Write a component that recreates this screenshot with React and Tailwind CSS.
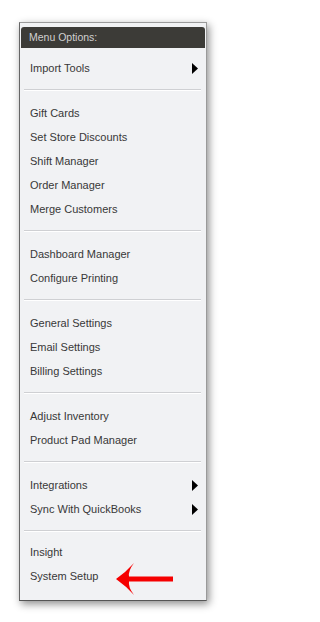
import React from 'react';

const sections = [
    [{ label: 'Import Tools', sub: true }],
    [
        { label: 'Gift Cards' },
        { label: 'Set Store Discounts' },
        { label: 'Shift Manager' },
        { label: 'Order Manager' },
        { label: 'Merge Customers' },
    ],
    [{ label: 'Dashboard Manager' }, { label: 'Configure Printing' }],
    [{ label: 'General Settings' }, { label: 'Email Settings' }, { label: 'Billing Settings' }],
    [{ label: 'Adjust Inventory' }, { label: 'Product Pad Manager' }],
    [
        { label: 'Integrations', sub: true },
        { label: 'Sync With QuickBooks', sub: true },
    ],
    [{ label: 'Insight' }, { label: 'System Setup' }],
];

const SubArrow = () => (
    <svg width="6" height="11" viewBox="0 0 6 11" className="shrink-0">
        <polygon points="0,0 6,5.5 0,11" fill="#000" />
    </svg>
);

// red pointer drawn over the menu, aimed at System Setup
const RedArrow = () => (
    <svg
        className="absolute left-[96px] top-[540px] pointer-events-none"
        width="60"
        height="34"
        viewBox="0 0 60 34"
    >
        <path
            d="M0 16 Q10 9 18 0 Q12 8 13 13.5 L57 13.5 L57 18.5 L13 18.5 Q12 24 18 32 Q10 23 0 16 Z"
            fill="#f50000"
        />
    </svg>
);

const MenuItem = ({ label, sub }) => (
    <div className="h-[24px] flex items-center justify-between pl-[9px] pr-[7px] text-[11px] text-[#383838] cursor-default">
        <span>{label}</span>
        {sub && <SubArrow />}
    </div>
);

const App = () => (
    <div className="w-[233px] h-[622px] bg-white pt-[22px] pl-[19px]" style={{ fontFamily: '"Liberation Sans", Arial, sans-serif' }}>
        <div className="relative w-[188px] bg-[#f1f2f4] border border-[#9a9a9a] border-l-[#666] border-b-[#555] pt-[4px] px-[1px] pb-[3px] shadow-[2px_3px_8px_rgba(0,0,0,0.45)]">
            <div className="h-[21px] rounded-t-[3px] bg-[#3c3b37] text-[#d0d0d0] text-[10.5px] flex items-center pl-[8px]">
                Menu Options:
            </div>
            {sections.map((items, i) => (
                <div key={i}>
                    <div
                        className={
                            i === 0
                                ? 'pt-[8px] pb-[9px]'
                                : i === sections.length - 1
                                  ? 'pt-[8px] pb-[9px]'
                                  : 'pt-[10px] pb-[9px]'
                        }
                    >
                        {items.map((item) => (
                            <MenuItem key={item.label} {...item} />
                        ))}
                    </div>
                    {i < sections.length - 1 && (
                        <div className="ml-[3px] mr-[4px] h-[2px] border-t border-[#cfd0d3] border-b border-b-white" />
                    )}
                </div>
            ))}
            <RedArrow />
        </div>
    </div>
);

export default App;
